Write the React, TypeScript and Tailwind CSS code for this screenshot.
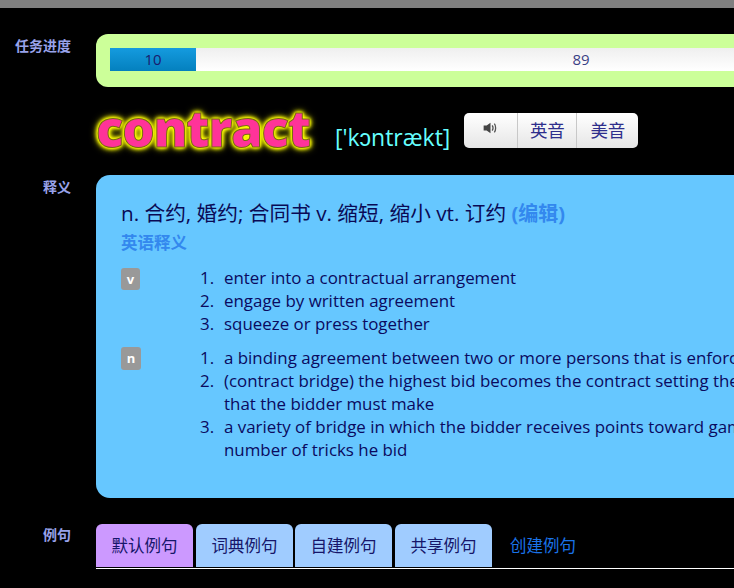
import React from "react";

const font = "font-['Open_Sans','Noto_Sans_CJK_SC',sans-serif]";

function Label({ children }: { children: React.ReactNode }) {
  return (
    <div className="w-[71px] mr-[25px] shrink-0 text-right text-[14px] leading-[18px] font-bold text-[#98a2ea] font-['Noto_Sans_CJK_SC',sans-serif]">
      {children}
    </div>
  );
}

function Speaker() {
  return (
    <svg width="15" height="12" viewBox="0 0 16 14" className="block">
      <path d="M0 4h3.500L8 1v12L3.500 10H0z" fill="#444" />
      <path d="M10 4c1 1.500 1 4.500 0 6M12.500 2c2 2.500 2 7.500 0 10" stroke="#555" strokeWidth="1.500" fill="none" />
    </svg>
  );
}

function Sense({ n, text, extra }: { n: string; text: string; extra?: string }) {
  return (
    <div className="flex">
      <span className="w-[24px] shrink-0">{n}</span>
      <div className="whitespace-nowrap">
        {text}
        {extra && <div>{extra}</div>}
      </div>
    </div>
  );
}

function Tab({ label, active, tight }: { label: string; active?: boolean; tight?: boolean }) {
  return (
    <div
      className={`w-[97px] h-[43px] rounded-t-[6px] flex items-center justify-center text-[16.500px] text-[#16166a] ${
        tight ? "mr-[2px]" : "mr-[3px]"
      } ${active ? "bg-[#cc99ff]" : "bg-[#a0ccff]"}`}
    >
      {label}
    </div>
  );
}

export default function App() {
  return (
    <div className={`w-[734px] h-[588px] bg-black overflow-hidden ${font}`}>
      <div className="h-[8px] bg-[#808080]" />

      <div className="flex mt-[26px]">
        <div className="pt-[2px]">
          <Label>任务进度</Label>
        </div>
        <div className="w-[884px] shrink-0 h-[53px] rounded-[12px] bg-[#ccff99] p-[14px]">
          <div className="h-[23px] flex bg-gradient-to-b from-[#efefef] to-[#ffffff] text-[15px] leading-[23px] text-center">
            <div className="w-[86px] bg-gradient-to-b from-[#149bdf] to-[#0480be] text-[#1a1a6e]">10</div>
            <div className="flex-1 text-[#3a3f85]">89</div>
          </div>
        </div>
      </div>

      <div className="flex items-start ml-[96px] mt-[14px] h-[75px]">
        <div className="text-[51px] leading-[56px] font-extrabold text-[#ff3399] tracking-[-1.300px] font-['Open_Sans',sans-serif] mt-[-2px] [-webkit-text-stroke:1px_#7a6a10] [text-shadow:0_0_2px_#ffff00,0_0_3px_#ffff00,0_0_4px_#ffff00,0_0_5px_#ffff00,0_0_6px_#ffff00,0_0_8px_#eeee00]">
          contract
        </div>
        <div className="ml-[25px] mt-[21px] text-[23px] leading-[30px] text-[#66ffff]">['kɔntrækt]</div>
        <div className="ml-[14px] mt-[12px] w-[174px] h-[35px] flex rounded-[5px] bg-gradient-to-b from-[#ffffff] to-[#e6e6e6] text-[#2e2e8c] text-[17.500px] font-['Noto_Sans_CJK_SC',sans-serif]">
          <div className="w-[54px] pl-[19px] pt-[9px] border-r border-[#c8c8c8]">
            <Speaker />
          </div>
          <div className="w-[59px] flex items-center justify-center border-r border-[#c8c8c8]">英音</div>
          <div className="flex-1 flex items-center justify-center">美音</div>
        </div>
      </div>

      <div className="flex mt-[-1px]">
        <div className="pt-[2px]">
          <Label>释义</Label>
        </div>
        <div className="w-[884px] shrink-0 h-[323px] rounded-[14px] bg-[#66c7ff] pl-[25px] pt-[25px] text-[#0a0a60]">
          <div className="text-[20.700px] leading-[26px] whitespace-nowrap text-[#0a0a55]">
            n. 合约, 婚约; 合同书 v. 缩短, 缩小 vt. 订约 <span className="text-[20px] font-bold text-[#3388ee]">(编辑)</span>
          </div>
          <div className="text-[16.500px] leading-[26px] font-bold text-[#3388ee] mt-[3px]">英语释义</div>
          <div className="flex mt-[12px] text-[16.900px] leading-[23px]">
            <div className="w-[79px] shrink-0">
              <span className="w-[19px] h-[22px] rounded-[3px] bg-[#999999] text-white text-[13px] font-bold flex items-center justify-center">v</span>
            </div>
            <div className="mt-[-2px]">
              <Sense n="1." text="enter into a contractual arrangement" />
              <Sense n="2." text="engage by written agreement" />
              <Sense n="3." text="squeeze or press together" />
            </div>
          </div>
          <div className="flex mt-[12px] text-[16.900px] leading-[23px]">
            <div className="w-[79px] shrink-0">
              <span className="w-[20px] h-[23px] rounded-[3px] bg-[#999999] text-white text-[13px] font-bold flex items-center justify-center">n</span>
            </div>
            <div className="mt-[-1px]">
              <Sense n="1." text="a binding agreement between two or more persons that is enforceable by law" />
              <Sense n="2." text="(contract bridge) the highest bid becomes the contract setting the number of tricks" extra="that the bidder must make" />
              <Sense n="3." text="a variety of bridge in which the bidder receives points toward game only for the" extra="number of tricks he bid" />
            </div>
          </div>
        </div>
      </div>

      <div className="flex mt-[26px]">
        <div className="pt-[1px]">
          <Label>例句</Label>
        </div>
        <div className="flex-1 border-b border-white h-[45px] flex items-start font-['Noto_Sans_CJK_SC',sans-serif]">
          <Tab label="默认例句" active />
          <Tab label="词典例句" tight />
          <Tab label="自建例句" />
          <Tab label="共享例句" />
          <div className="ml-[15px] h-[43px] flex items-center text-[16.500px] text-[#1a73e8]">创建例句</div>
        </div>
      </div>
    </div>
  );
}
